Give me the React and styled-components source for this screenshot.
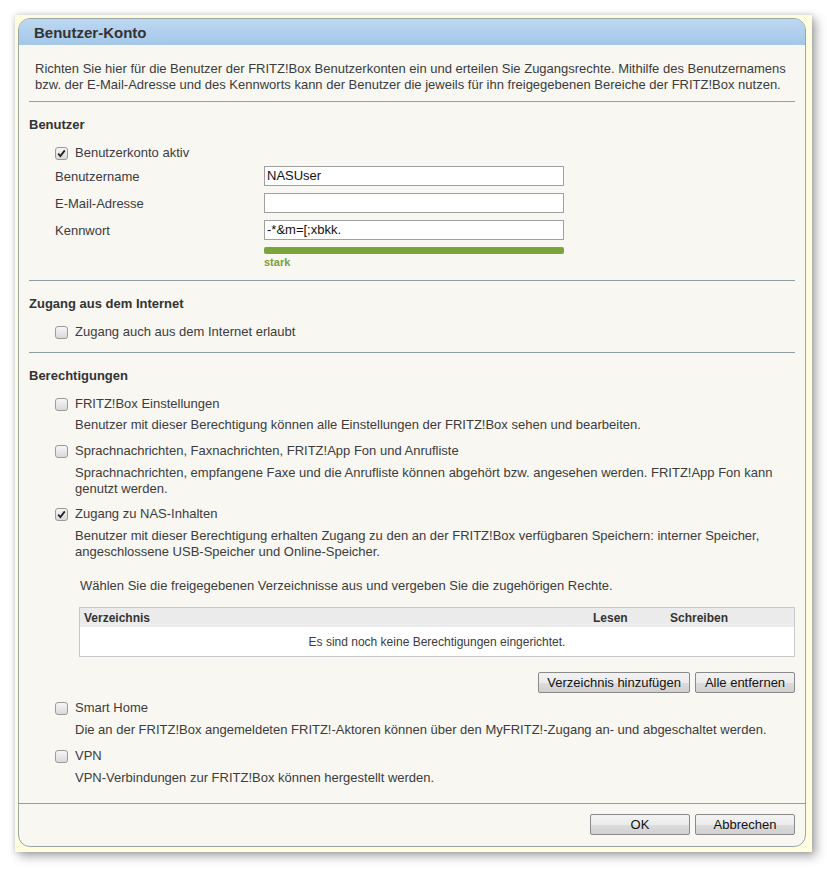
import React from "react";
import styled, { createGlobalStyle } from "styled-components";

const GlobalStyle = createGlobalStyle`
  body {
    margin: 0;
    background: #ffffff;
    font-family: "Liberation Sans", Arial, sans-serif;
    font-size: 13px;
    color: #3c3c3c;
  }
`;

const Page = styled.div`
  padding: 15px;
`;

const Frame = styled.div`
  width: 788px;
  padding: 3px 6px 5px 3px;
  background: #fffddf;
  box-shadow: 4px 4px 10px rgba(0, 0, 0, 0.35), 0 0 5px rgba(0, 0, 0, 0.15);
`;

const Panel = styled.div`
  border: 1px solid #9aa5a8;
  border-radius: 12px;
  background: #f8f7f2;
  overflow: hidden;
`;

const Header = styled.div`
  height: 26px;
  display: flex;
  align-items: center;
  padding-left: 15px;
  background: linear-gradient(#bdd8f1, #a4c7e8);
  font-size: 15px;
  font-weight: bold;
  color: #333;
`;

const Content = styled.div`
  padding: 0 10px;
`;

const Intro = styled.p`
  margin: 16px 0 0;
  padding-left: 6px;
  line-height: 16px;
`;

const Divider = styled.div`
  margin-top: ${(p) => p.$top}px;
  height: 1px;
  background: #8f9fa3;
`;

const Heading = styled.div`
  margin-top: ${(p) => p.$top}px;
  line-height: 16px;
  font-weight: bold;
  color: #333;
`;

const CheckRow = styled.label`
  display: flex;
  align-items: center;
  gap: 7px;
  margin: ${(p) => p.$top}px 0 0 26px;
  line-height: 16px;
`;

const Box = styled.span`
  width: 11px;
  height: 11px;
  border: 1px solid #9a9a9a;
  border-radius: 3px;
  background: linear-gradient(#f6f6f6, #d9d9d9);
  display: flex;
  align-items: center;
  justify-content: center;
  flex: none;
`;

const Desc = styled.p`
  margin: ${(p) => p.$top}px 0 0 46px;
  line-height: 16px;
  white-space: nowrap;
`;

const FormRow = styled.div`
  display: flex;
  align-items: center;
  margin: ${(p) => p.$top}px 0 0 26px;
`;

const FormLabel = styled.span`
  width: 209px;
`;

const Input = styled.div`
  width: 296px;
  height: 18px;
  border: 1px solid #a0a0a0;
  background: #fff;
  padding-left: 2px;
  line-height: 18px;
  color: #111;
  font-size: 13px;
`;

const StrengthBar = styled.div`
  margin: 7px 0 0 235px;
  width: 300px;
  height: 7px;
  border-radius: 2px;
  background: #7ba53b;
`;

const Strength = styled.div`
  margin: 2px 0 0 235px;
  line-height: 12px;
  font-size: 11px;
  font-weight: bold;
  color: #78a03e;
`;

const Hint = styled.p`
  margin: 18px 0 0 51px;
  line-height: 16px;
`;

const Table = styled.div`
  margin: 13px 0 0 50px;
  border: 1px solid #c9c9c9;
  background: #fff;
  font-size: 12px;
`;

const TableHead = styled.div`
  display: grid;
  grid-template-columns: 509px 77px 1fr;
  height: 19px;
  align-items: center;
  padding-left: 4px;
  background: #ebebeb;
  font-weight: bold;
  color: #333;
`;

const TableEmpty = styled.div`
  height: 29px;
  display: flex;
  align-items: center;
  justify-content: center;
  color: #3c3c3c;
`;

const ButtonRow = styled.div`
  display: flex;
  justify-content: flex-end;
  gap: 5px;
  margin-top: ${(p) => p.$top}px;
`;

const Button = styled.button`
  min-width: 100px;
  height: 21px;
  padding: 0 8px;
  border: 1px solid #8a8a8a;
  border-radius: 2px;
  background: linear-gradient(#f3f3f3 0%, #ebebeb 50%, #dddddd 51%, #d0d0d0 100%);
  font-family: "Liberation Sans", Arial, sans-serif;
  font-size: 13px;
  color: #111;
`;

const Footer = styled.div`
  margin-top: 17px;
  border-top: 1px solid #8f9fa3;
  padding: 10px 10px 11px;
`;

const Check = ({ checked }) => (
  <Box>
    {checked && (
      <svg width="9" height="9" viewBox="0 0 9 9">
        <path d="M1.2 4.6 L3.4 7 L7.8 1.4" fill="none" stroke="#222" strokeWidth="1.8" />
      </svg>
    )}
  </Box>
);

const Item = ({ top, descTop = 6, checked, label, children }) => (
  <>
    <CheckRow $top={top}>
      <Check checked={checked} />
      {label}
    </CheckRow>
    <Desc $top={descTop}>{children}</Desc>
  </>
);

export default function App() {
  return (
    <Page>
      <GlobalStyle />
      <Frame>
        <Panel>
          <Header>Benutzer-Konto</Header>
          <Content>
            <Intro>
              Richten Sie hier für die Benutzer der FRITZ!Box Benutzerkonten ein und erteilen Sie Zugangsrechte. Mithilfe des Benutzernamens
              <br />
              bzw. der E-Mail-Adresse und des Kennworts kann der Benutzer die jeweils für ihn freigegebenen Bereiche der FRITZ!Box nutzen.
            </Intro>
            <Divider $top={8} />

            <Heading $top={15}>Benutzer</Heading>
            <CheckRow $top={12}>
              <Check checked />
              Benutzerkonto aktiv
            </CheckRow>
            <FormRow $top={5}>
              <FormLabel>Benutzername</FormLabel>
              <Input>NASUser</Input>
            </FormRow>
            <FormRow $top={7}>
              <FormLabel>E-Mail-Adresse</FormLabel>
              <Input />
            </FormRow>
            <FormRow $top={7}>
              <FormLabel>Kennwort</FormLabel>
              <Input>-*&amp;m=[;xbkk.</Input>
            </FormRow>
            <StrengthBar />
            <Strength>stark</Strength>
            <Divider $top={12} />

            <Heading $top={15}>Zugang aus dem Internet</Heading>
            <CheckRow $top={12}>
              <Check />
              Zugang auch aus dem Internet erlaubt
            </CheckRow>
            <Divider $top={12} />

            <Heading $top={15}>Berechtigungen</Heading>
            <Item top={12} descTop={5} label="FRITZ!Box Einstellungen">
              Benutzer mit dieser Berechtigung können alle Einstellungen der FRITZ!Box sehen und bearbeiten.
            </Item>
            <Item top={10} label="Sprachnachrichten, Faxnachrichten, FRITZ!App Fon und Anrufliste">
              Sprachnachrichten, empfangene Faxe und die Anrufliste können abgehört bzw. angesehen werden. FRITZ!App Fon kann
              <br />
              genutzt werden.
            </Item>
            <Item top={9} checked label="Zugang zu NAS-Inhalten">
              Benutzer mit dieser Berechtigung erhalten Zugang zu den an der FRITZ!Box verfügbaren Speichern: interner Speicher,
              <br />
              angeschlossene USB-Speicher und Online-Speicher.
            </Item>
            <Hint>Wählen Sie die freigegebenen Verzeichnisse aus und vergeben Sie die zugehörigen Rechte.</Hint>
            <Table>
              <TableHead>
                <span>Verzeichnis</span>
                <span>Lesen</span>
                <span>Schreiben</span>
              </TableHead>
              <TableEmpty>Es sind noch keine Berechtigungen eingerichtet.</TableEmpty>
            </Table>
            <ButtonRow $top={15}>
              <Button>Verzeichnis hinzufügen</Button>
              <Button>Alle entfernen</Button>
            </ButtonRow>
            <Item top={7} label="Smart Home">
              Die an der FRITZ!Box angemeldeten FRITZ!-Aktoren können über den MyFRITZ!-Zugang an- und abgeschaltet werden.
            </Item>
            <Item top={10} label="VPN">
              VPN-Verbindungen zur FRITZ!Box können hergestellt werden.
            </Item>
          </Content>
          <Footer>
            <ButtonRow $top={0}>
              <Button>OK</Button>
              <Button>Abbrechen</Button>
            </ButtonRow>
          </Footer>
        </Panel>
      </Frame>
    </Page>
  );
}
